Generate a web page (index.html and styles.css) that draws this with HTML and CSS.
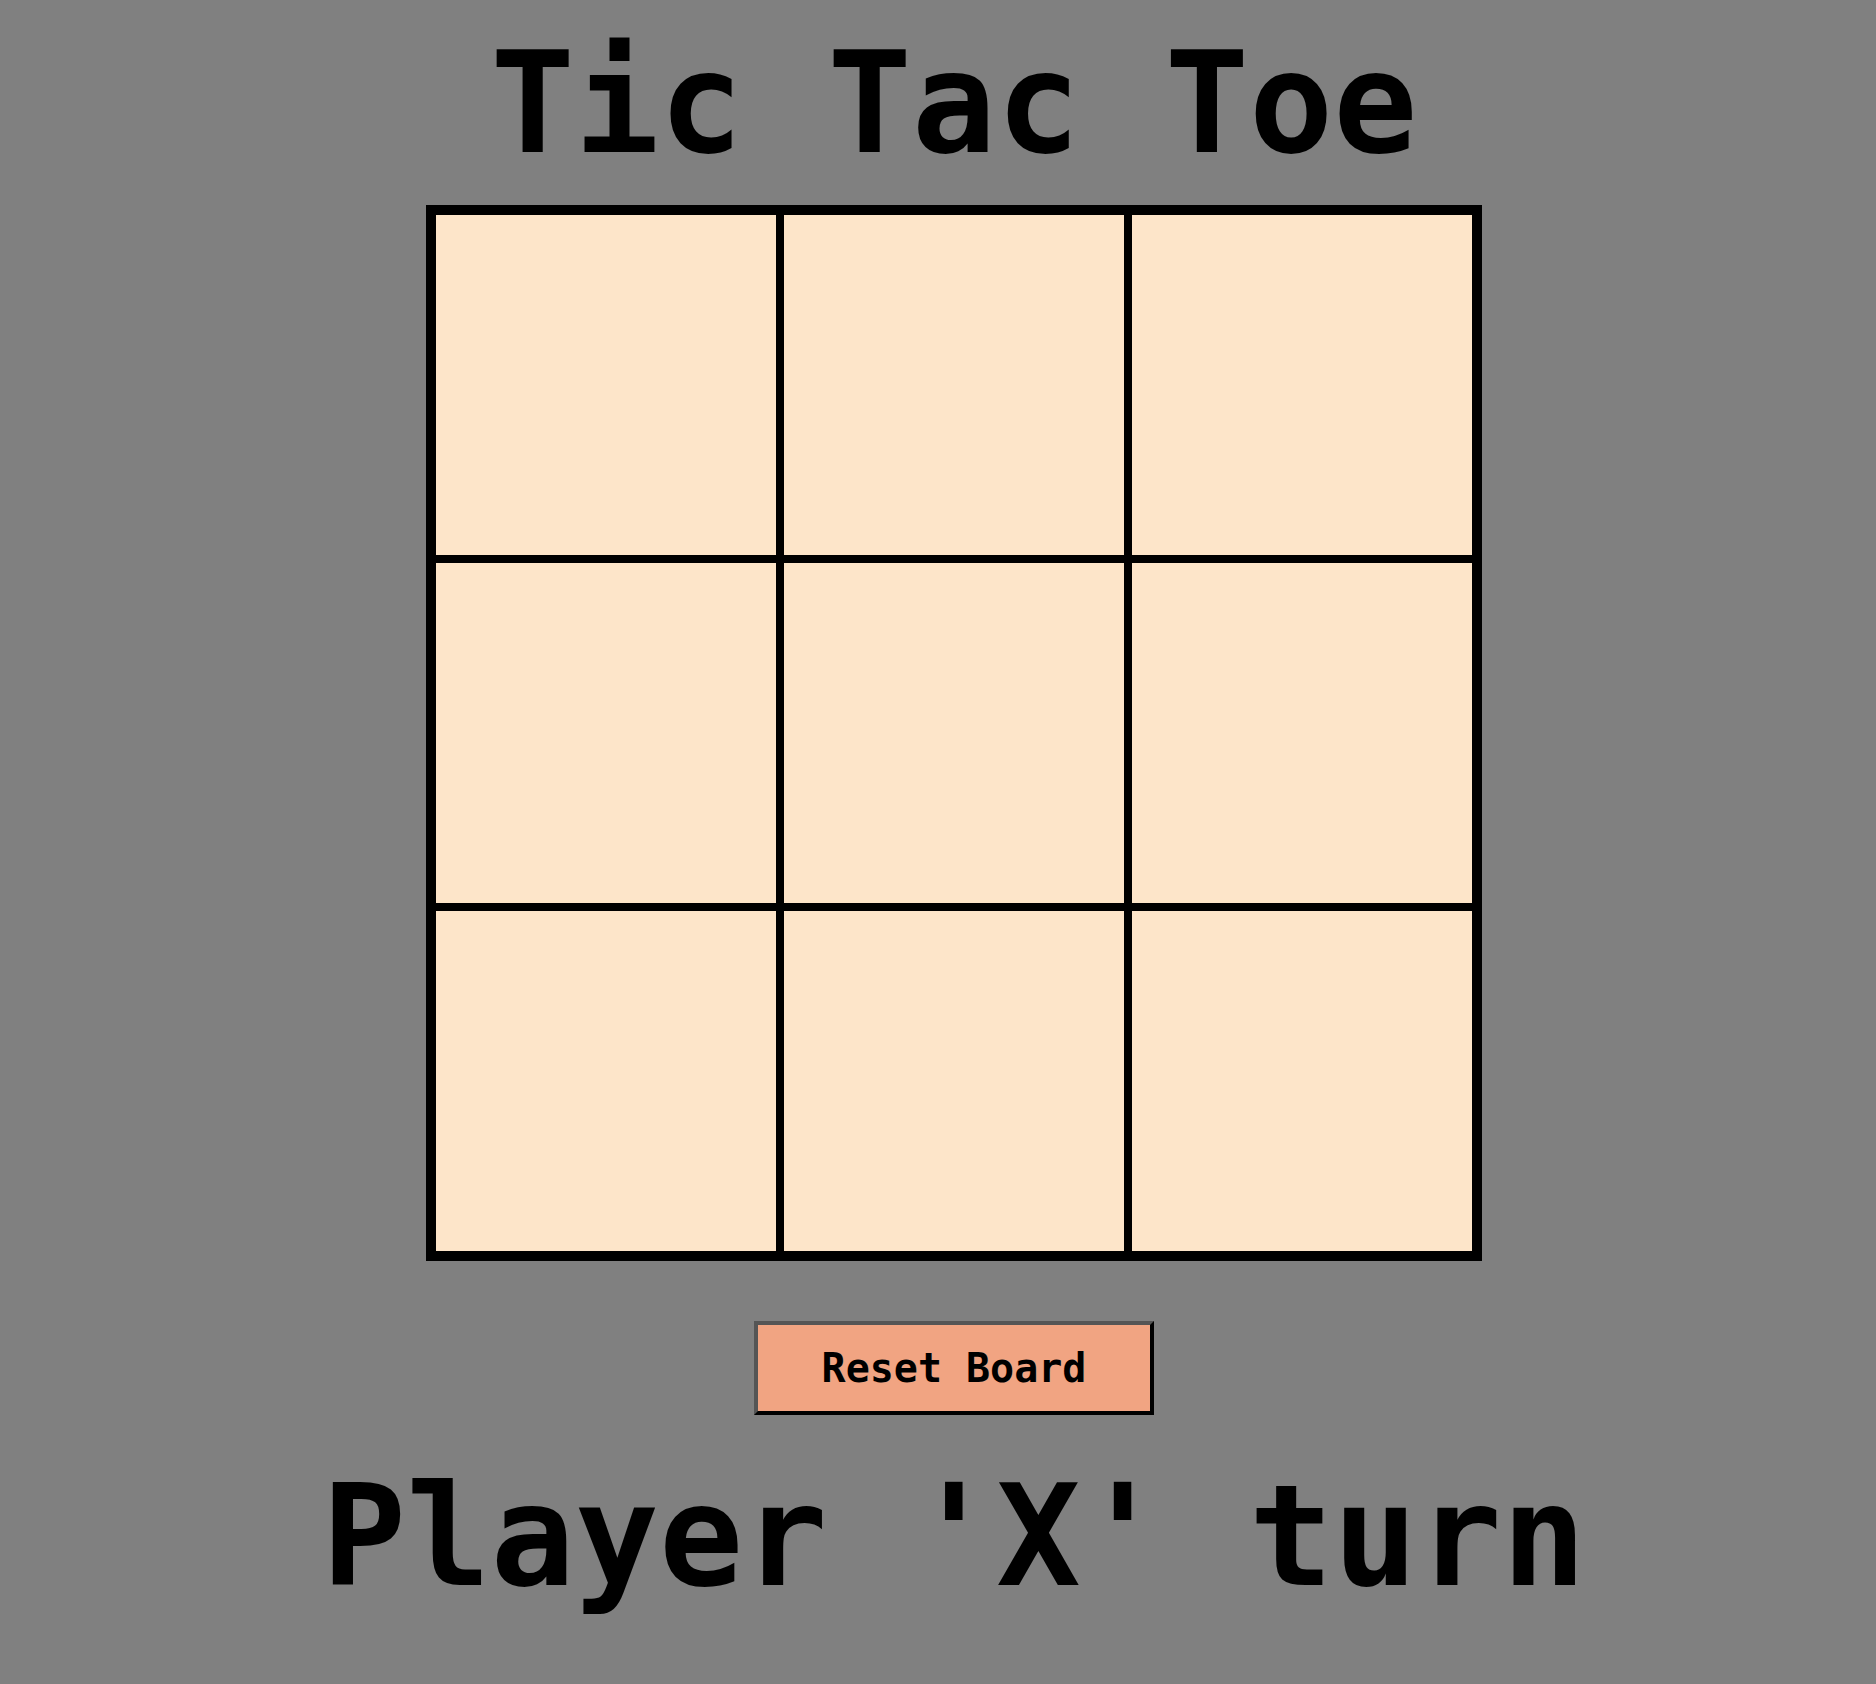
FILE: index.html
```html
<!DOCTYPE html>
<html>
<head>
<meta charset="utf-8">
<title>Tic Tac Toe</title>
<link rel="stylesheet" href="styles.css">
</head>
<body>
<main class="game">
  <h1 class="title">Tic Tac Toe</h1>
  <div class="board">
    <div class="cell"></div><div class="cell"></div><div class="cell"></div>
    <div class="cell"></div><div class="cell"></div><div class="cell"></div>
    <div class="cell"></div><div class="cell"></div><div class="cell"></div>
  </div>
  <button class="reset" type="button">Reset Board</button>
  <p class="status">Player 'X' turn</p>
</main>
</body>
</html>
```

FILE: styles.css
```css
html, body {
  margin: 0;
  padding: 0;
  background: #808080;
}

body {
  font-family: "DejaVu Sans Mono", "Liberation Mono", monospace;
  color: #000;
}

.game {
  display: flex;
  flex-direction: column;
  align-items: center;
  padding-left: 32px;
}

.title {
  margin: 22px 0 0;
  font-size: 140px;
  font-weight: bold;
  line-height: 163px;
}

.board {
  margin-top: 20px;
  display: grid;
  grid-template-columns: repeat(3, 348px);
  grid-template-rows: repeat(3, 348px);
  border: 6px solid #000;
}

.cell {
  background: #fde5c9;
  border: 4px solid #000;
}

.reset {
  margin-top: 60px;
  width: 400px;
  height: 94px;
  padding: 0;
  background: #f1a482;
  border-style: solid;
  border-width: 4px;
  border-color: #555 #000 #000 #555;
  font-family: "DejaVu Sans Mono", "Liberation Mono", monospace;
  font-size: 40px;
  font-weight: bold;
  color: #000;
}

.status {
  margin: 40px 0 0;
  font-size: 140px;
  font-weight: bold;
  line-height: 163px;
}
```
